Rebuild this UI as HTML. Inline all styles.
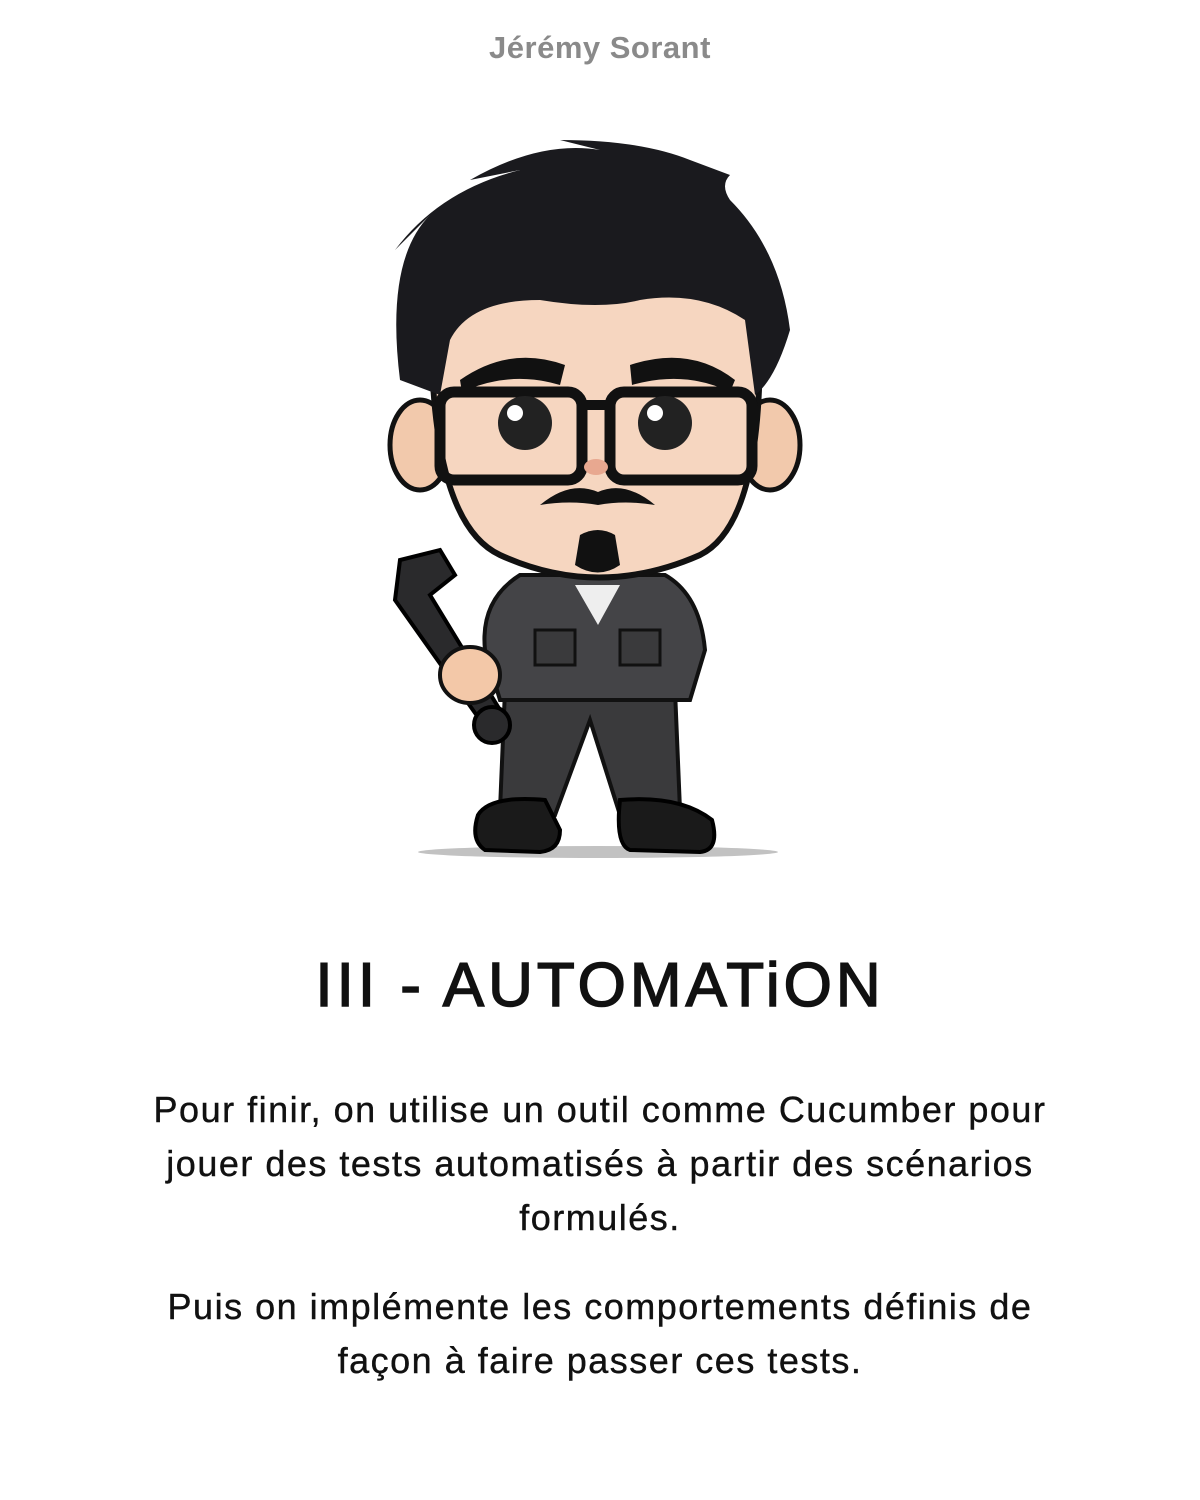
<!DOCTYPE html>
<html><head><meta charset="utf-8"><style>
html,body{margin:0;padding:0;background:#fff;width:1200px;height:1500px;overflow:hidden;font-family:"Liberation Sans",sans-serif;}
.hdr{position:absolute;top:30px;left:0;width:1200px;text-align:center;font-weight:bold;font-size:31px;color:#8a8a8a;letter-spacing:0.5px;}
.title{position:absolute;top:950px;left:0;width:1200px;text-align:center;font-size:62px;color:#111;letter-spacing:4px;-webkit-text-stroke:1.5px #111;}
.p{position:absolute;left:0;width:1200px;text-align:center;font-size:36px;letter-spacing:1.5px;line-height:54px;color:#111;white-space:nowrap;-webkit-text-stroke:0.4px #111;}
svg{position:absolute;left:0;top:0}
</style></head><body>
<div class="hdr">Jérémy Sorant</div>
<svg width="1200" height="900" viewBox="0 0 1200 900">
<ellipse cx="598" cy="852" rx="180" ry="6" fill="#999" opacity="0.6"/>
<path d="M505 690 L500 810 L555 815 L590 720 L620 815 L680 810 L675 690 Z" fill="#3a3a3c" stroke="#111" stroke-width="4"/>
<path d="M478 815 Q490 795 545 800 L560 830 Q560 850 540 852 L485 850 Q470 840 478 815Z" fill="#1a1a1a" stroke="#000" stroke-width="4"/>
<path d="M620 800 Q680 795 712 820 Q720 850 700 852 L630 850 Q615 845 620 800Z" fill="#1a1a1a" stroke="#000" stroke-width="4"/>
<path d="M520 575 Q480 600 485 650 L500 700 L690 700 L705 650 Q700 595 665 575 Z" fill="#444447" stroke="#111" stroke-width="4"/>
<path d="M575 585 L598 625 L620 585 Z" fill="#eee"/>
<rect x="535" y="630" width="40" height="35" fill="#3a3a3c" stroke="#111" stroke-width="3"/>
<rect x="620" y="630" width="40" height="35" fill="#3a3a3c" stroke="#111" stroke-width="3"/>
<path d="M400 560 L395 600 L480 720 L500 710 L430 595 L455 575 L440 550 Z" fill="#2a2a2c" stroke="#000" stroke-width="4"/>
<circle cx="492" cy="725" r="18" fill="#2a2a2c" stroke="#000" stroke-width="4"/>
<ellipse cx="470" cy="675" rx="30" ry="28" fill="#f3c8a8" stroke="#111" stroke-width="4"/>
<ellipse cx="420" cy="445" rx="30" ry="45" fill="#f2c9ac" stroke="#111" stroke-width="5"/>
<ellipse cx="770" cy="445" rx="30" ry="45" fill="#f2c9ac" stroke="#111" stroke-width="5"/>
<path d="M432 290 Q425 520 500 555 Q598 600 700 555 Q770 520 758 290 Z" fill="#f6d6c0" stroke="#111" stroke-width="6"/>
<path d="M400 380 Q385 260 430 215 L395 250 Q440 190 520 170 L470 180 Q540 140 600 150 L560 140 Q640 140 690 160 L730 175 Q720 185 730 200 Q780 250 790 330 Q775 380 755 395 L745 320 Q700 290 640 300 Q600 310 540 300 Q470 300 450 340 L440 395 Z" fill="#1a1a1e"/>
<path d="M460 380 Q510 345 565 365 L560 385 Q510 370 462 392Z" fill="#111"/>
<path d="M630 365 Q690 345 735 380 L730 392 Q685 370 632 385Z" fill="#111"/>
<rect x="440" y="392" width="142" height="88" rx="14" fill="none" stroke="#111" stroke-width="11"/>
<rect x="610" y="392" width="142" height="88" rx="14" fill="none" stroke="#111" stroke-width="11"/>
<path d="M582 405 L610 405" stroke="#111" stroke-width="10"/>
<circle cx="525" cy="423" r="27" fill="#222"/><circle cx="665" cy="423" r="27" fill="#222"/>
<circle cx="515" cy="413" r="8" fill="#fff"/><circle cx="655" cy="413" r="8" fill="#fff"/>
<ellipse cx="596" cy="467" rx="12" ry="8" fill="#e8a890"/>
<path d="M540 505 Q570 480 598 492 Q625 480 655 505 Q625 500 598 505 Q570 500 540 505Z" fill="#111"/>
<path d="M580 535 Q598 525 615 535 L620 565 Q598 580 575 565Z" fill="#111"/>
</svg>
<div class="title">III - AUTOMATiON</div>
<div class="p" style="top:1083px">Pour finir, on utilise un outil comme Cucumber pour<br>jouer des tests automatisés à partir des scénarios<br>formulés.</div>
<div class="p" style="top:1280px">Puis on implémente les comportements définis de<br>façon à faire passer ces tests.</div>
</body></html>
